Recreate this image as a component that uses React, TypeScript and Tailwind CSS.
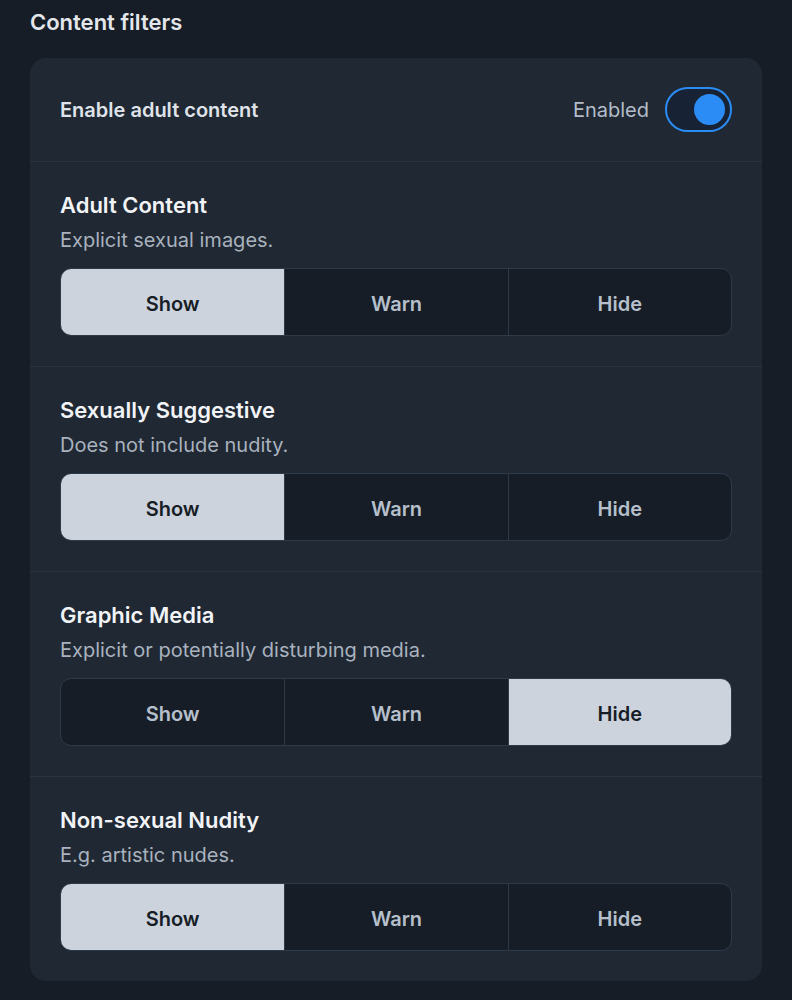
import React from 'react';

type Choice = 'show' | 'warn' | 'hide';

const filters: { title: string; desc: string; value: Choice }[] = [
  { title: 'Adult Content', desc: 'Explicit sexual images.', value: 'show' },
  { title: 'Sexually Suggestive', desc: 'Does not include nudity.', value: 'show' },
  { title: 'Graphic Media', desc: 'Explicit or potentially disturbing media.', value: 'hide' },
  { title: 'Non-sexual Nudity', desc: 'E.g. artistic nudes.', value: 'show' },
];

const options: { key: Choice; label: string }[] = [
  { key: 'show', label: 'Show' },
  { key: 'warn', label: 'Warn' },
  { key: 'hide', label: 'Hide' },
];

function Segmented({ value }: { value: Choice }) {
  return (
    <div className="mt-[15px] grid h-[68px] grid-cols-3 overflow-hidden rounded-[11px] border-[1.5px] border-[#2f3a48] bg-[#171d26]">
      {options.map((o, i) => {
        const active = o.key === value;
        return (
          <div
            key={o.key}
            className={`flex items-center justify-center pt-1 text-[20px] font-semibold ${i > 0 ? 'border-l-[1.5px] border-[#2f3a48]' : ''} ${active ? 'bg-[#ccd3dd] text-[#171d26]' : 'text-[#b6c0cc]'}`}
          >
            {o.label}
          </div>
        );
      })}
    </div>
  );
}

export default function App() {
  return (
    <main className="min-h-[1000px] bg-[#171d26] px-[30px] pt-2 pb-5 font-['Inter',sans-serif]">
      <h1 className="text-[22px] leading-7 font-semibold text-[#e3e7ec]">Content filters</h1>
      <section className="mt-[22px] overflow-hidden rounded-[16px] bg-[#1f2833]">
        <div className="flex h-[104px] items-center justify-between border-b border-[#2a3441] px-[30px]">
          <span className="text-[20px] font-semibold text-[#dfe3e9]">Enable adult content</span>
          <div className="flex items-center gap-4">
            <span className="text-[20px] text-[#b4bdc9]">Enabled</span>
            <div className="flex h-[45px] w-[67px] items-center justify-end rounded-full border-2 border-[#2b8cf3] bg-[#172234] pr-[5px]">
              <div className="h-[31px] w-[31px] rounded-full bg-[#2b8cf6]" />
            </div>
          </div>
        </div>
        {filters.map((f, i) => (
          <div key={f.title} className={`px-[30px] pt-[29px] pb-[30px] ${i < filters.length - 1 ? 'border-b border-[#2a3441]' : ''}`}>
            <h2 className="text-[22px] leading-7 font-semibold text-[#f1f3f6]">{f.title}</h2>
            <p className="mt-2 text-[20px] leading-[26px] text-[#a9b2be]">{f.desc}</p>
            <Segmented value={f.value} />
          </div>
        ))}
      </section>
    </main>
  );
}
